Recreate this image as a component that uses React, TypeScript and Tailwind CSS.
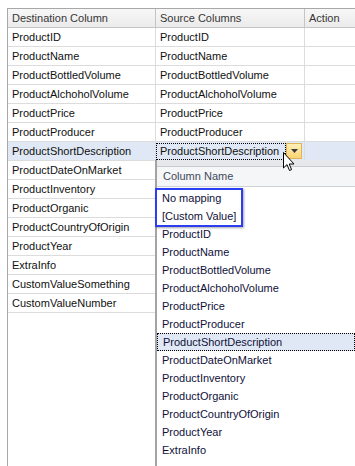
import React from "react";

const destColumns = [
  "ProductID",
  "ProductName",
  "ProductBottledVolume",
  "ProductAlchoholVolume",
  "ProductPrice",
  "ProductProducer",
  "ProductShortDescription",
  "ProductDateOnMarket",
  "ProductInventory",
  "ProductOrganic",
  "ProductCountryOfOrigin",
  "ProductYear",
  "ExtraInfo",
  "CustomValueSomething",
  "CustomValueNumber",
];

const sourceColumns = [
  "ProductID",
  "ProductName",
  "ProductBottledVolume",
  "ProductAlchoholVolume",
  "ProductPrice",
  "ProductProducer",
  "ProductShortDescription",
];

const popupItems = [
  "No mapping",
  "[Custom Value]",
  "ProductID",
  "ProductName",
  "ProductBottledVolume",
  "ProductAlchoholVolume",
  "ProductPrice",
  "ProductProducer",
  "ProductShortDescription",
  "ProductDateOnMarket",
  "ProductInventory",
  "ProductOrganic",
  "ProductCountryOfOrigin",
  "ProductYear",
  "ExtraInfo",
];

const SELECTED = 6;

const Cursor = () => (
  <svg width="13" height="20" viewBox="0 0 13 20" className="absolute left-[283px] top-[152px]">
    <path
      d="M0.5 0.5 L0.5 16 L4 12.6 L6.5 18.5 L8.6 17.6 L6.2 12 L11 12 Z"
      fill="white"
      stroke="black"
      strokeWidth="1"
      strokeLinejoin="miter"
    />
  </svg>
);

const DropButton = () => (
  <div className="w-[16px] h-[16px] mr-[2px] flex items-center justify-center border border-[#e2b458] bg-gradient-to-b from-[#fff0b8] to-[#fbd371]">
    <svg width="7" height="4" viewBox="0 0 7 4">
      <path d="M0 0 L7 0 L3.5 4 Z" fill="#3c3c3c" />
    </svg>
  </div>
);

const Popup = () => (
  <div className="absolute left-[155px] top-[160px] right-0 bottom-0 bg-white border-l-2 border-[#a3a3a3] flex flex-col">
    <div className="h-[7px] bg-[#e6e8ec] border-b border-[#c9cbd0]" />
    <div className="h-[20px] flex items-center pl-[6px] bg-[#f5f6f8] border-b border-[#cfd2d6] text-[#3f4a5a]">
      Column Name
    </div>
    <div className="relative flex flex-col pt-[2px]">
      {popupItems.map((item, i) => (
        <div
          key={i}
          className={`h-[18px] flex items-center pl-[5px] text-[#10103a] ${
            i === 8 ? "bg-[#dfe8f4] border border-dotted border-black pl-[4px]" : ""
          }`}
        >
          {item}
        </div>
      ))}
      <div className="absolute left-[-2px] top-[1px] w-[88px] h-[39px] border-2 border-[#2b3ff0] shadow-[1px_1px_2px_rgba(0,0,0,0.35)]" />
    </div>
  </div>
);

export default function App() {
  return (
    <div
      className="relative w-[355px] h-[466px] overflow-hidden bg-white pt-[8px] pl-[7px] text-[11px] leading-none"
      style={{ fontFamily: "'Liberation Sans', Arial, sans-serif" }}
    >
      <div className="h-full border-l border-t border-[#a8a8a8] flex flex-col">
        <div className="flex h-[19px] bg-gradient-to-b from-[#f7f7f7] to-[#ebebeb] border-b border-[#c4c4c4] text-[#363636]">
          <div className="w-[148px] flex items-center pl-[4px] border-r border-[#c4c4c4]">Destination Column</div>
          <div className="w-[149px] flex items-center pl-[4px] border-r border-[#c4c4c4]">Source Columns</div>
          <div className="flex-1 flex items-center pl-[4px]">Action</div>
        </div>
        {destColumns.map((name, i) => (
          <div
            key={i}
            className={`flex h-[19px] border-b border-[#dcdcdc] text-[#111] ${i === SELECTED ? "bg-[#dfe8f4]" : ""}`}
          >
            <div className="w-[148px] flex items-center pl-[4px] border-r border-[#dcdcdc]">{name}</div>
            {i === SELECTED ? (
              <div className="w-[149px] flex items-center justify-between border-r border-[#dcdcdc]">
                <div className="h-[17px] w-[130px] flex items-center pl-[3px] border border-dotted border-black">
                  {sourceColumns[i]}
                </div>
                <DropButton />
              </div>
            ) : (
              <div className="w-[149px] flex items-center pl-[4px] border-r border-[#dcdcdc]">
                {sourceColumns[i] ?? ""}
              </div>
            )}
            <div className="flex-1" />
          </div>
        ))}
      </div>
      <Popup />
      <Cursor />
    </div>
  );
}
